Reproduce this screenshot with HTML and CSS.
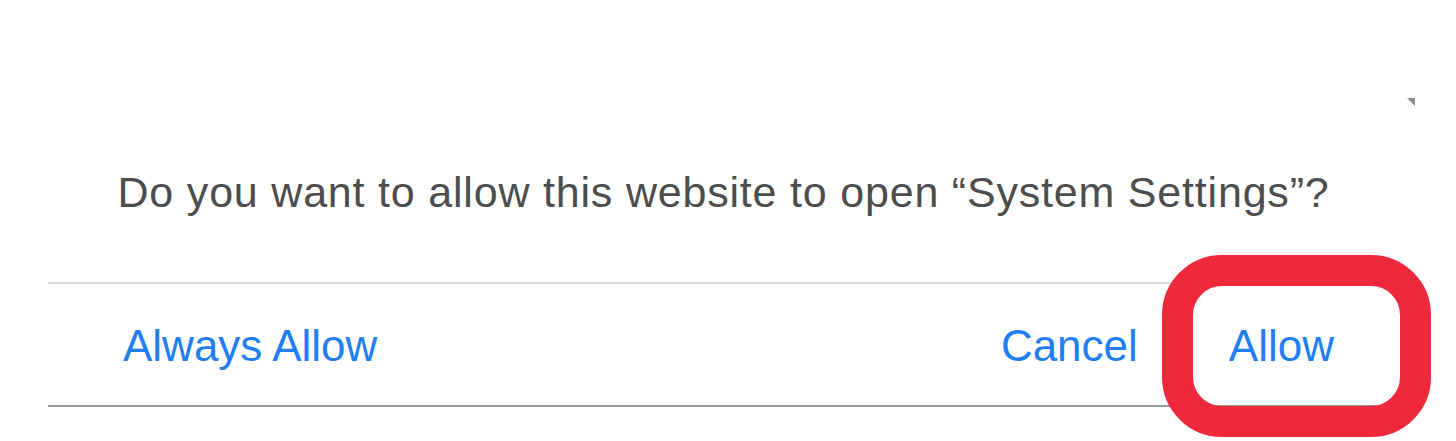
FILE: index.html
```html
<!DOCTYPE html>
<html>
<head>
<meta charset="utf-8">
<link rel="stylesheet" href="styles.css">
</head>
<body>
    <div class="page">
        <div class="dialog">
            <p class="message">Do you want to allow this website to open “System Settings”?</p>
            <div class="actions">
                <span class="btn">Always Allow</span>
                <div class="right">
                    <span class="btn">Cancel</span>
                    <span class="btn btn-allow">Allow</span>
                </div>
            </div>
        </div>
    </div>
</body>
</html>
```

FILE: styles.css
```css
html, body {
    min-height: 441px;
}
body {
    margin: 0;
    background-color: #fff;
    font-family: "Liberation Sans", Arial, sans-serif;
}
.page {
    padding: 97px 41px 34px 48px;
}
.dialog {
    position: relative;
    background-color: #fff;
}
.dialog::before {
    content: "";
    position: absolute;
    top: 1px;
    right: 0;
    border-top: 8px solid #8a8a8a;
    border-left: 8px solid transparent;
}
.message {
    margin: 0;
    padding: 72px 16px 66px 0;
    font-size: 43px;
    line-height: 47px;
    color: #4d4d4d;
    text-align: center;
    letter-spacing: 0.8px;
    white-space: nowrap;
}
.actions {
    display: flex;
    justify-content: space-between;
    padding: 37px 81px 34px 75px;
    border-top: 2px solid #dadada;
    border-bottom: 2px solid #9b9b9b;
}
.right {
    display: flex;
    gap: 91px;
}
.btn {
    font-size: 44px;
    line-height: 50px;
    color: #1f7ff2;
}
.btn-allow {
    position: relative;
}
/* red highlight drawn over the dialog */
.btn-allow::after {
    content: "";
    position: absolute;
    top: -66px;
    right: -97px;
    bottom: -66px;
    left: -67px;
    border: 31px solid #ee293c;
    border-radius: 60px;
}
```
